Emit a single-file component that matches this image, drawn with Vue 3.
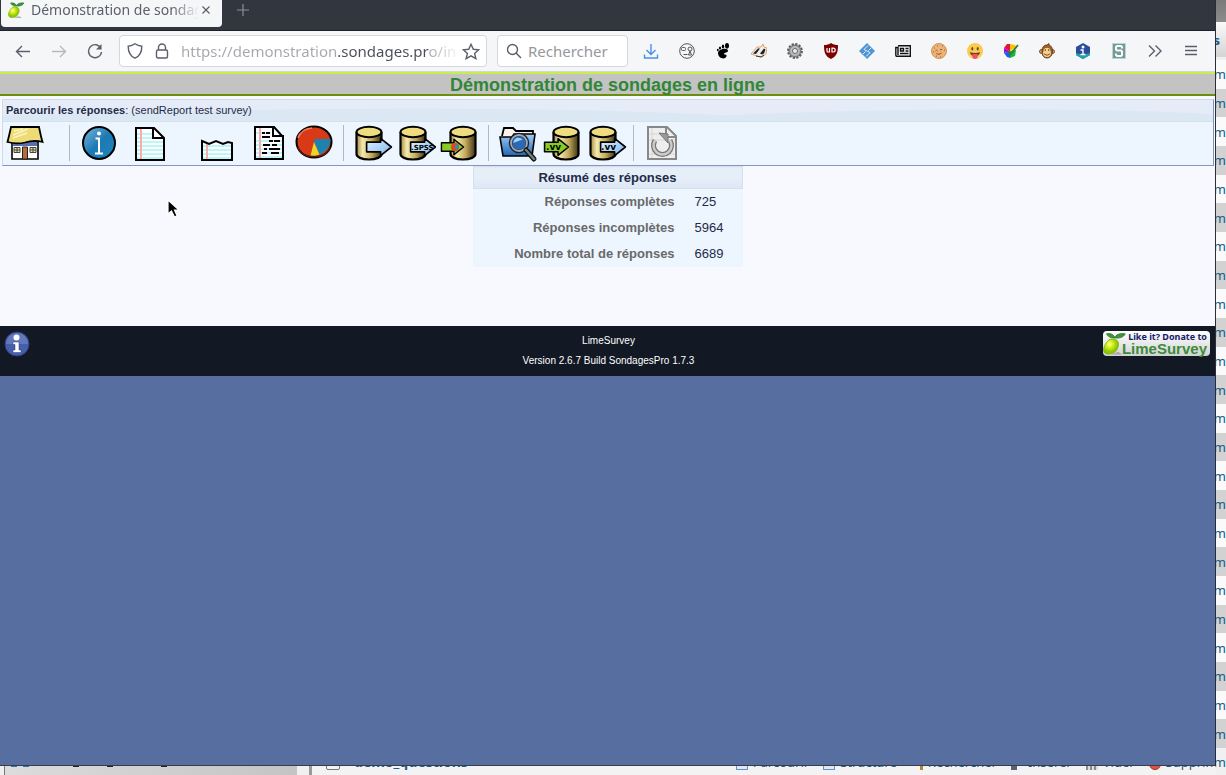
<script setup>
import { ref } from 'vue'

const url = ref('https://demonstration.sondages.pro/index.php')
const search = ref('')

const summary = [
  { label: 'Réponses complètes', value: 725 },
  { label: 'Réponses incomplètes', value: 5964 },
  { label: 'Nombre total de réponses', value: 6689 }
]
</script>

<template>
  <div class="desktop">
    <svg class="defs" aria-hidden="true">
      <defs>
        <linearGradient id="gold">
          <stop offset="0" stop-color="#a68a3e" />
          <stop offset="0.25" stop-color="#f6eab0" />
          <stop offset="0.6" stop-color="#c4ab5c" />
          <stop offset="1" stop-color="#3c3212" />
        </linearGradient>
        <linearGradient id="sky" x1="0" y1="0" x2="1" y2="1">
          <stop offset="0" stop-color="#e2f1ff" />
          <stop offset="1" stop-color="#7db7ee" />
        </linearGradient>
        <linearGradient id="folder" x1="0" y1="0" x2="0" y2="1">
          <stop offset="0" stop-color="#9fcdf8" />
          <stop offset="1" stop-color="#2265b4" />
        </linearGradient>
        <linearGradient id="ball" x1="0" y1="0" x2="1" y2="1">
          <stop offset="0" stop-color="#7fbbe0" />
          <stop offset="0.5" stop-color="#1d79b4" />
          <stop offset="1" stop-color="#1c86bd" />
        </linearGradient>
        <radialGradient id="lime" cx="0.4" cy="0.35">
          <stop offset="0" stop-color="#fdffa0" />
          <stop offset="0.5" stop-color="#d4ec12" />
          <stop offset="1" stop-color="#8cc80a" />
        </radialGradient>
      </defs>
      <symbol id="db" viewBox="0 0 28 36">
        <path d="M1.500 7v22c0 3 5 5.500 12.500 5.500s12.500-2.500 12.500-5.500V7" fill="url(#gold)" stroke="#000" stroke-width="2.200" />
        <ellipse cx="14" cy="7" rx="12.500" ry="5.200" fill="#f0dc80" stroke="#000" stroke-width="2" />
      </symbol>
      <symbol id="arrow" viewBox="0 0 26 18">
        <path d="M1.500 4.500h13V1L24.500 9 14.500 17V13.500h-13z" stroke="#000" stroke-width="1.500" stroke-linejoin="round" />
      </symbol>
      <symbol id="fruit" viewBox="0 0 18 18">
        <path d="M6 17h8l-3-2z" fill="#888" opacity="0.6" />
        <path d="M5 6c4-1 7 1 6 5s-4 6-8 5.500C0 16 0 13 1 11s2-4 4-5z" fill="url(#lime)" stroke="#78b012" stroke-width="0.600" />
        <path d="M8 5C5 5 3.500 4 2.500 2c2.500-.5 4.500 0 6 2.500C9.500 2.500 12 1.500 16 2c-1 2.500-4 3.500-8 3z" fill="#3d9636" stroke="#216b24" stroke-width="0.500" />
      </symbol>
    </svg>

    <div class="main">
      <div class="browser">
        <div class="tabs">
          <div class="tab">
            <svg class="favicon" viewBox="0 0 18 18"><use href="#fruit" /></svg>
            <span class="tab-title">Démonstration de sondages en ligne</span>
            <button class="close" aria-label="Fermer">
              <svg width="10" height="10" viewBox="0 0 10 10"><path d="M1.500 1.500l7 7M8.500 1.500l-7 7" stroke="#5b5f6b" stroke-width="1.200" /></svg>
            </button>
          </div>
          <button class="new-tab" aria-label="Nouvel onglet">
            <svg width="12" height="12" viewBox="0 0 12 12"><path d="M6 0v12M0 6h12" stroke="#8b8f98" stroke-width="1.200" /></svg>
          </button>
        </div>

        <div class="navbar">
          <button class="nav-btn" aria-label="Précédent">
            <svg width="16" height="16" viewBox="0 0 16 16" class="line"><path d="M15 8.500H2M7 3L1.500 8.500 7 14" /></svg>
          </button>
          <button class="nav-btn faded" aria-label="Suivant">
            <svg width="16" height="16" viewBox="0 0 16 16" class="line"><path d="M1 8.500h13M9 3l5.500 5.500L9 14" /></svg>
          </button>
          <button class="nav-btn" aria-label="Actualiser">
            <svg width="16" height="16" viewBox="0 0 16 16" class="line"><path d="M14 5.500A6.500 6.500 0 1 0 14.500 9" /><path d="M14.500 1v5.500H9z" fill="#5b5f6b" stroke="none" /></svg>
          </button>

          <div class="url-box">
            <svg width="16" height="16" viewBox="0 0 16 16" class="line"><path d="M8 .8C6 2.200 3.500 3 1.200 3.200c0 5.500 1.600 9.800 6.800 12 5.200-2.200 6.800-6.500 6.800-12C12.500 3 10 2.200 8 .8z" /></svg>
            <svg width="14" height="16" viewBox="0 0 14 16" class="line"><rect x="1.500" y="7" width="11" height="8" rx="1.500" /><path d="M3.500 7V4.500a3.500 3.500 0 0 1 7 0V7" /></svg>
            <input v-model="url" class="url" type="text" aria-label="Adresse" />
            <svg width="18" height="17" viewBox="0 0 18 17" class="line"><path d="M9 1.300l2.300 5 5.400.5-4.100 3.600 1.300 5.300L9 12.900l-4.900 2.800 1.300-5.300L1.300 6.800l5.400-.5z" /></svg>
          </div>

          <div class="search-box">
            <svg width="16" height="16" viewBox="0 0 16 16" class="line"><circle cx="6.500" cy="6.500" r="5" /><path d="M10 10l5 5" /></svg>
            <input v-model="search" class="search" type="text" placeholder="Rechercher" aria-label="Rechercher" />
          </div>

          <div class="extensions">
            <button class="nav-btn" aria-label="Téléchargements">
              <svg width="16" height="16" viewBox="0 0 16 16"><path d="M8 1v10M3.500 7L8 11.500 12.500 7M1.500 11.500V15h13v-3.500" fill="none" stroke="#4a90e8" stroke-width="1.400" /></svg>
            </button>
            <button class="nav-btn" aria-label="Visage">
              <svg width="16" height="16" viewBox="0 0 16 16" fill="none" stroke="#555"><circle cx="8" cy="8" r="7.300" /><rect x="2.500" y="4.500" width="4" height="3" rx="1" /><circle cx="11" cy="6" r="2" /><path d="M4.500 11.500h4M9.500 12l1.500-4 1.500 4z" /></svg>
            </button>
            <button class="nav-btn" aria-label="GNOME">
              <svg width="16" height="16" viewBox="0 0 16 16" fill="#000"><path d="M3 10c0-4 10-6 10-2 0 2-4 1-4 3 0 1 3 0 2.500 2C11 17 3 16 3 10z" /><ellipse cx="12" cy="2.800" rx="2" ry="2.800" /><ellipse cx="8" cy="3.500" rx="1.200" ry="1.900" /><ellipse cx="5" cy="5" rx="1.100" ry="1.600" /><ellipse cx="2.800" cy="7" rx=".9" ry="1.300" /></svg>
            </button>
            <button class="nav-btn" aria-label="Badger">
              <svg width="16" height="16" viewBox="0 0 16 16"><path d="M0 11l6-7 4 0 2-3 1 3 3 1-1 6-4 3-5-1z" fill="#eee" stroke="#d98235" stroke-width=".7" /><path d="M2 10.500l5-5h2l-4 5.500zM9 10.500l4-5 1.500 1-1.500 4-2 1z" fill="#222" /><path d="M5 13l5 1 3-2" stroke="#333" fill="none" /></svg>
            </button>
            <button class="nav-btn" aria-label="Options">
              <svg width="16" height="16" viewBox="0 0 16 16"><circle cx="8" cy="8" r="6.800" fill="#aaa" stroke="#5c5c5c" stroke-width="2.200" stroke-dasharray="2.200 1.360" /><circle cx="8" cy="8" r="5.500" fill="#bbb" stroke="#777" /><circle cx="8" cy="8" r="2.500" fill="#eee" stroke="#666" /></svg>
            </button>
            <button class="nav-btn" aria-label="uBlock">
              <svg width="16" height="16" viewBox="0 0 16 16"><path d="M8 0c2 1.500 4.500 2 7 2 0 6-.5 11-7 14C1.500 13 1 8 1 2c2.500 0 5-.5 7-2z" fill="#800000" /><path d="M4 5v3q0 1 1 1h1.500V5" fill="none" stroke="#fff" stroke-width="1.200" /><path d="M9 5.200h1.200q2 0 2 1.900t-2 1.900H9z" fill="none" stroke="#fff" stroke-width="1.200" /></svg>
            </button>
            <button class="nav-btn" aria-label="Synchronisation">
              <svg width="16" height="16" viewBox="0 0 16 16"><path d="M8 0l8 8-8 8-8-8z" fill="#4f94d4" /><path d="M9 2.500L5 6.500l3 1.500 3 1.500-4 4M12 5L9.500 7.500M6.500 8.500L4 11" fill="none" stroke="#f5f5f5" stroke-width=".9" /></svg>
            </button>
            <button class="nav-btn" aria-label="Lecture">
              <svg width="16" height="12" viewBox="0 0 16 12" fill="none" stroke="#111" stroke-width="1.400"><path d="M3 .8h12.300v10.500H1.500Q.8 11.300.8 10V2.500H3V10" /><path d="M5.500 3.500h3v2.500h-3zM10.500 3.500h3M10.500 6h3M5 8.500h8.500" /></svg>
            </button>
            <button class="nav-btn" aria-label="Cookies">
              <svg width="16" height="16" viewBox="0 0 16 16"><circle cx="8" cy="8" r="7.500" fill="#e9b478" stroke="#cf9355" /><path d="M3 5h1M6 3h1M11 3h1M13 7h1M5 13h1M9 14h1M2 9h1" stroke="#a5622d" stroke-width="1.200" /><path d="M4.500 8q1-1.500 2 0M9 7q1-1.500 2 0M5.500 10.500q2.500 2 5-.5" fill="none" stroke="#a8452f" /></svg>
            </button>
            <button class="nav-btn" aria-label="Émoticône">
              <svg width="16" height="16" viewBox="0 0 16 16"><circle cx="8" cy="8" r="8" fill="#fccb4e" /><ellipse cx="5.300" cy="5.800" rx="1" ry="1.700" fill="#65432a" /><ellipse cx="10.700" cy="5.800" rx="1" ry="1.700" fill="#65432a" /><path d="M3 9q5 2 10 0c-.5 3-2 4-5 4S3.500 12 3 9z" fill="#65432a" /><path d="M5.500 11h5v3.500q-2.500 3-5 0z" fill="#f0506e" /></svg>
            </button>
            <button class="nav-btn" aria-label="Couleurs">
              <svg width="16" height="16" viewBox="0 0 16 16"><path d="M7 8L1 5l3-4h3z" fill="#e5123c" /><path d="M7 8V1l5 1 1 2z" fill="#f5c400" /><path d="M7 8L1 5v5z" fill="#b800d8" /><path d="M7 8l-6 2 3 4 3 1z" fill="#1760e8" /><path d="M7 8v7l5-2 1-6z" fill="#14b83a" /><path d="M5 8l2.500 3L15 2" fill="none" stroke="#397a28" stroke-width="1.800" /></svg>
            </button>
            <button class="nav-btn" aria-label="Greasemonkey">
              <svg width="16" height="16" viewBox="0 0 16 16" stroke="#5b2e0c" stroke-width=".8"><circle cx="2.500" cy="8.500" r="2" fill="#dca45c" /><circle cx="13.500" cy="8.500" r="2" fill="#dca45c" /><path d="M3 8c0-4 2-6 5-6l2-1.500L10 2c2 .5 3.500 2.500 3.500 6 0 4-2 7-5.500 7s-5-3-5-7z" fill="#a5652a" /><path d="M4 8c0-5 8-5 8 0l.5 2c0 3-2 4.500-4.500 4.500S3.500 13 3.500 10z" fill="#f4d08e" stroke-width=".6" /><path d="M6.300 6v2M9.700 6v2M5 11q3 2.500 6 0" fill="none" /></svg>
            </button>
            <button class="nav-btn" aria-label="Info">
              <svg width="16" height="16" viewBox="0 0 16 16"><path d="M8 0l7 4v8l-7 4-7-4V4z" fill="#2b4c9b" /><path d="M1 10l7 2 7-2v2l-7 4-7-4z" fill="#24a3a7" /><circle cx="8" cy="4" r="1.500" fill="#fff" /><path d="M5.500 7H8v4.500M5.500 11.500h5" fill="none" stroke="#fff" stroke-width="1.400" /></svg>
            </button>
            <button class="nav-btn" aria-label="Stylus">
              <svg width="16" height="16" viewBox="0 0 16 16"><path d="M1.500.5h13v15h-13z" fill="#7d9797" stroke="#b4d6d4" /><path d="M11 5.500V4L10 3H6L5 4v2.500L6 7.500h4l1 1V12l-1 1H6l-1-1v-1.500" fill="none" stroke="#f2ffff" stroke-width="2" /></svg>
            </button>
            <button class="nav-btn" aria-label="Plus d'outils">
              <svg width="16" height="16" viewBox="0 0 16 16" class="line"><path d="M2 2.500L7.500 8 2 13.500M8.500 2.500L14 8l-5.500 5.500" /></svg>
            </button>
            <button class="nav-btn" aria-label="Menu">
              <svg width="16" height="16" viewBox="0 0 16 16" class="line"><path d="M2 3.500h12M2 7.500h12M2 11.500h12" /></svg>
            </button>
          </div>
        </div>

        <div class="page">
          <h1>Démonstration de sondages en ligne</h1>

          <div class="menubar">
            <div class="menubar-title">
              <svg class="wave" viewBox="0 0 1210 22" preserveAspectRatio="none"><path d="M0 16Q250 9 420 9T720 16Q900 8 1050 10T1210 16V22H0z" fill="#dce7f4" /></svg>
              <p><strong>Parcourir les réponses</strong>: (sendReport test survey)</p>
            </div>
            <div class="tools">
              <button class="tool home" aria-label="Accueil">
                <svg viewBox="0 0 40 40">
                  <path d="M7 19h26v17H7z" fill="#fff" stroke="#000" stroke-width="1.600" />
                  <path d="M8 19h24v4H8z" fill="#5870b0" />
                  <path d="M9 24.500h6v5H9zM25 24.500h6v5h-6z" fill="#eadf9e" stroke="#444" />
                  <path d="M12 24.500v5M9 27h6M28 24.500v5M25 27h6" stroke="#444" />
                  <path d="M17.500 24h5v12h-5z" fill="#b86b3c" stroke="#222" />
                  <path d="M6 4h28c1 5 2 10 3.500 15-5-1.500-11-1.500-17.500.5-6 1.500-12 1-17.500-.5C4 13 5 9 6 4z" fill="#eddb78" stroke="#000" stroke-width="1.800" />
                  <path d="M9 8l9-2M8 12l15-6M8 15l14-5" stroke="#fbf5bd" stroke-width="1.400" />
                </svg>
              </button>
              <hr class="sep wide" />
              <button class="tool" aria-label="Informations">
                <svg viewBox="0 0 40 40">
                  <circle cx="20" cy="20" r="16" fill="url(#ball)" stroke="#000" stroke-width="2" />
                  <circle cx="20" cy="10.500" r="2" fill="#fff" />
                  <path d="M16.500 15.500H20V30M16 30.500h8" fill="none" stroke="#fff" stroke-width="2" />
                </svg>
              </button>
              <button class="tool doc" aria-label="Toutes les réponses">
                <svg viewBox="0 0 40 40">
                  <path d="M6 5h18l10 10v22H6z" fill="#fff" />
                  <path d="M7 11h15M7 15h15M7 19h26M7 23h26M7 27h26M7 31h26M7 35h26" stroke="#a5f3f6" stroke-width="1.600" />
                  <path d="M11 6v31" stroke="#f8adad" stroke-width="2" />
                  <path d="M6 5h18l10 10v22H6zM23 5v10h11" fill="none" stroke="#000" stroke-width="2" />
                </svg>
              </button>
              <button class="tool last" aria-label="Dernières réponses">
                <svg viewBox="0 0 40 40">
                  <path d="M5 18l7 3 7-3 7 3 5-2 4 1v17H5z" fill="#fff" />
                  <path d="M6 23h28M6 27h28M6 31h28M6 35h28" stroke="#a5f3f6" stroke-width="1.600" />
                  <path d="M10 21v16" stroke="#f8adad" stroke-width="2" />
                  <path d="M5 18l7 3 7-3 7 3 5-2 4 1v17H5z" fill="none" stroke="#000" stroke-width="2" />
                </svg>
              </button>
              <button class="tool report" aria-label="Saisie de données">
                <svg viewBox="0 0 40 40">
                  <path d="M6 4h19l9 10v22H6z" fill="#fff" />
                  <path d="M7 10h15M7 18h26M7 22h26M7 26h26M7 30h26M7 34h26" stroke="#a5f3f6" stroke-width="1.400" />
                  <path d="M11 5v31" stroke="#f8adad" stroke-width="2" />
                  <path d="M6 4h19l9 10v22H6zM24 4v9h11" fill="none" stroke="#000" stroke-width="2" />
                  <path d="M13 10h3M17 10h4M13 14h8M20 18h4M25 18h6M14 22h7M23 22h5M15 26h3M20 26h11M13 30h5M22 30h8" stroke="#000" stroke-width="2" />
                </svg>
              </button>
              <button class="tool pie" aria-label="Statistiques">
                <svg viewBox="0 0 40 40">
                  <ellipse cx="20" cy="19" rx="17.500" ry="15.500" fill="#d83a17" stroke="#000" stroke-width="2" />
                  <path d="M20 19l1-3h15.500c0 7-4 13-11 15.500z" fill="#1d82b0" />
                  <path d="M20 19l5.500 12.500c-3 1.500-7 1.500-9 1z" fill="#ecd526" />
                  <path d="M4 15Q7 6 18 5" fill="none" stroke="#f08060" stroke-width="1.500" />
                  <path d="M36 24c-3 13-29 13-32 0" fill="none" stroke="#541a12" stroke-width="1.500" />
                </svg>
              </button>
              <hr class="sep" />
              <button class="tool" aria-label="Exporter">
                <svg viewBox="0 0 40 40"><use href="#db" x="2" y="2" width="28" height="36" /><use href="#arrow" x="12" y="14" width="28" height="20" fill="url(#sky)" /></svg>
              </button>
              <button class="tool spss" aria-label="Exporter SPSS">
                <svg viewBox="0 0 40 40"><use href="#db" x="2" y="2" width="28" height="36" /><use href="#arrow" x="12" y="14" width="28" height="20" fill="url(#sky)" /><text x="14" y="27" class="tiny">.SPSS</text></svg>
              </button>
              <button class="tool import" aria-label="Importer">
                <svg viewBox="0 0 40 40"><use href="#db" x="10" y="2" width="28" height="36" /><use href="#arrow" x="1" y="15" width="25" height="18" fill="#86cc22" /><circle cx="16" cy="24" r="4" fill="#de452b" /><path d="M16 24v-2h4q0 3-2 5z" fill="#2992b9" /></svg>
              </button>
              <hr class="sep" />
              <button class="tool" aria-label="Rechercher des réponses">
                <svg viewBox="0 0 40 40">
                  <path d="M4 13l2-8h9l3 3h17v8" fill="#fff3f0" stroke="#000" stroke-width="1.800" />
                  <path d="M2 14h12l2-3h21l-3 22H5z" fill="url(#folder)" stroke="#000" stroke-width="1.600" />
                  <circle cx="21" cy="20" r="8.500" fill="#2c69b4" stroke="#222" stroke-width="3.500" />
                  <circle cx="21" cy="20" r="8" fill="none" stroke="#9dabc0" stroke-width="1.800" />
                  <path d="M15.500 20c0-5 6-7 9-3-3 0-6 2-9 3z" fill="#9fd0f5" />
                  <path d="M28 27l8 9" stroke="#111" stroke-width="5" stroke-linecap="round" /><path d="M28 27l8 9" stroke="#708078" stroke-width="2.500" stroke-linecap="round" />
                </svg>
              </button>
              <button class="tool spss" aria-label="Importer VV">
                <svg viewBox="0 0 40 40"><use href="#db" x="10" y="2" width="28" height="36" /><use href="#arrow" x="1" y="14" width="27" height="20" fill="#86cc22" /><text x="4" y="27" class="tiny vv">.vv</text></svg>
              </button>
              <button class="tool vv-out" aria-label="Exporter VV">
                <svg viewBox="0 0 40 40"><use href="#db" x="2" y="2" width="28" height="36" /><use href="#arrow" x="12" y="14" width="28" height="20" fill="url(#sky)" /><text x="14" y="27" class="tiny vv">.vv</text></svg>
              </button>
              <hr class="sep tight" />
              <button class="tool" aria-label="Réponses itératives">
                <svg viewBox="0 0 40 40">
                  <path d="M6 4h19l9 9v23H6z" fill="#eee" />
                  <path d="M10 5v31M7 11h16M7 17h26M7 31h26" stroke="#d4d4d4" />
                  <path d="M6 4h19l9 9v23H6zM24 4v10h10" fill="none" stroke="#888" stroke-width="2" />
                  <path d="M13 17.500a9 9 0 1 0 15 0" fill="none" stroke="#777" stroke-width="5" /><path d="M13 17.500a9 9 0 1 0 15 0" fill="none" stroke="#ccc" stroke-width="2.500" />
                  <path d="M17 10l9 1v9z" fill="#999" stroke="#777" />
                </svg>
              </button>
            </div>
          </div>

          <table class="summary">
            <thead>
              <tr><th colspan="2" class="caption">Résumé des réponses</th></tr>
            </thead>
            <tbody>
              <tr v-for="row in summary" :key="row.label">
                <th scope="row">{{ row.label }}</th>
                <td>{{ row.value }}</td>
              </tr>
            </tbody>
          </table>

          <svg class="cursor" viewBox="0 0 14 20"><path d="M1 1v14l3.500-3 3 6 2.500-1.200L7.500 11H12z" stroke="#fff" stroke-width="1.200" /></svg>
        </div>

        <footer class="footer">
          <a href="#" class="help" aria-label="Aide">
            <svg width="26" height="26" viewBox="0 0 26 26">
              <circle cx="13" cy="13" r="12" fill="#465fac" stroke="#313f82" />
              <path d="M2 13a11 11 0 0 1 22 0z" fill="#7488c4" opacity="0.600" />
              <circle cx="12.500" cy="6.500" r="3" fill="#fff" /><path d="M9 11h6v8h2v2.500H9V19h2v-5.500H9z" fill="#fff" stroke="#29388c" stroke-width=".5" />
            </svg>
          </a>
          <div class="version">
            <p><a href="#">LimeSurvey</a></p>
            <p>Version 2.6.7 Build SondagesPro 1.7.3</p>
          </div>
          <a href="#" class="donate">
            <svg width="25" height="25" viewBox="0 0 18 18"><use href="#fruit" /></svg>
            <span class="donate-text"><span class="like">Like it? Donate to</span><span class="brand">LimeSurvey</span></span>
          </a>
        </footer>
      </div>

      <div class="behind">
        <div class="behind-left"><span class="dash blue"></span><span class="dash blue"></span><span class="dash one"></span><span class="dash two"></span><span class="dash three"></span></div>
        <div class="behind-table">
          <span class="box"></span>
          <a href="#" class="name">demo_questions</a>
          <span class="star">★</span>
          <a href="#" class="op"><i class="ico grid"></i>Parcourir</a>
          <a href="#" class="op"><i class="ico grid"></i>Structure</a>
          <a href="#" class="op"><i class="ico glass"></i>Rechercher</a>
          <a href="#" class="op"><i class="ico insert"></i>Insérer</a>
          <a href="#" class="op"><i class="ico trash"></i>Vider</a>
          <a href="#" class="op"><i class="ico stop"></i>Supprim</a>
        </div>
      </div>
    </div>

    <div class="side">
      <div class="side-top"></div>
      <div class="side-head"><span>s</span></div>
      <div v-for="n in 24" :key="n" class="side-row"><span>m</span></div>
      <div class="side-end"><span>m</span></div>
    </div>
  </div>
</template>

<style>
body {
  background: #f0f0f0;
  overflow: hidden;
}
</style>

<style scoped>
.desktop {
  display: flex;
  height: 100vh;
  font-family: "Liberation Sans", Arial, sans-serif;
}

.defs {
  position: absolute;
  width: 0;
  height: 0;
}

p,
h1 {
  margin: 0;
}

button {
  padding: 0;
  border: 0;
  background: none;
}

button svg {
  display: block;
}

a {
  color: inherit;
  text-decoration: none;
}

.main {
  flex: 1;
  min-width: 0;
  display: flex;
  flex-direction: column;
}

.browser {
  flex: 1;
  display: flex;
  flex-direction: column;
  background: #566fa0;
  border-right: 1px solid #2b2e38;
  border-bottom: 1px solid #3a3d46;
}

/* browser chrome */
.tabs {
  display: flex;
  height: 30px;
  background: #32363f;
  border-bottom: 1px solid #1f2129;
  font-family: "Noto Sans", sans-serif;
}

.tab {
  display: flex;
  align-items: center;
  width: 221px;
  height: 27px;
  margin-left: 1px;
  padding: 0 11px 8px 7px;
  box-sizing: border-box;
  background: #f5f6f7;
  border-radius: 0 0 4px 4px;
}

.favicon {
  width: 18px;
  height: 18px;
  margin-right: 5px;
}

.tab-title {
  flex: 1;
  overflow: hidden;
  font-size: 14px;
  line-height: 20px;
  color: #5b5f6b;
  white-space: nowrap;
  mask-image: linear-gradient(to right, #000 84%, transparent);
}

.close {
  margin-left: 2px;
}

.new-tab {
  height: 20px;
  margin-left: 15px;
}

.navbar {
  display: flex;
  align-items: center;
  height: 40px;
  padding: 0 6px 0 5px;
  background: #f5f6f7;
  border-bottom: 1px solid #d4d6d8;
}

.nav-btn {
  display: flex;
  align-items: center;
  justify-content: center;
  width: 36px;
  height: 32px;
}

.faded {
  opacity: 0.4;
}

.line {
  flex: none;
  fill: none;
  stroke: #5b5f6b;
  stroke-width: 1.4;
}

.url-box,
.search-box {
  display: flex;
  align-items: center;
  height: 32px;
  box-sizing: border-box;
  background: #fff;
  border: 1px solid #d5d7da;
  border-radius: 4px;
}

.url-box {
  flex: 1;
  min-width: 0;
  gap: 12px;
  margin: 0 10px 0 6px;
  padding: 0 6px 0 7px;
}

.url,
.search {
  flex: 1;
  min-width: 0;
  padding: 0;
  border: 0;
  outline: 0;
  font-family: "Noto Sans", sans-serif;
  font-size: 15px;
  line-height: 22px;
}

.url {
  margin-right: -6px;
  background: linear-gradient(to right, #a5a7ad 156px, #4a4d58 156px, #4a4d58 248px, #a5a7ad 248px, transparent 280px);
  background-clip: text;
  -webkit-text-fill-color: transparent;
}

.search-box {
  width: 131px;
  gap: 6px;
  padding: 0 8px;
}

.search::placeholder {
  color: #95979d;
}

.extensions {
  display: flex;
  margin-left: 5px;
}

/* survey page */
.page {
  position: relative;
  min-height: 254px;
  background: #f8f9ff;
}

h1 {
  padding-top: 2px;
  border-top: 2px solid #c8ee4c;
  border-bottom: 2px solid #6b8e0b;
  background: #c3c3c3;
  color: #328637;
  font-size: 18px;
  line-height: 18px;
  text-align: center;
}

.menubar {
  margin: 3px 1px 0 2px;
  border: 1px solid #cbdcec;
  border-right-color: #7c94bd;
  border-bottom-color: #8397bf;
  background: #edf6ff;
}

.menubar-title {
  position: relative;
  border-bottom: 1px solid #d2e0f0;
  background: #e5ecf7;
  color: #1e2b49;
  font-size: 11px;
  line-height: 21px;
}

.menubar-title p {
  position: relative;
  padding-left: 3px;
}

.wave {
  position: absolute;
  width: 100%;
  height: 100%;
}

.tools {
  display: flex;
  align-items: center;
  height: 41px;
  padding-bottom: 2px;
}

.tool {
  width: 40px;
  height: 40px;
}

.home {
  margin-left: 2px;
}

.doc {
  margin-left: 11px;
}

.last {
  margin-left: 27px;
}

.report {
  margin-left: 12px;
}

.pie {
  margin-left: 5px;
}

.spss {
  margin-left: 4px;
}

.import {
  margin-left: 2px;
}

.vv-out {
  margin-left: 5px;
}

.sep {
  width: 1px;
  height: 36px;
  margin: 0 9px;
  border: 0;
  background: #b4b8bd;
}

.wide {
  margin-left: 24px;
}

.tight {
  margin: 0 8px 0 6px;
}

.tiny {
  font: bold 7px "DejaVu Sans", sans-serif;
}

.vv {
  font-size: 9px;
}

.summary {
  width: 270px;
  margin: 0 auto;
  border-collapse: collapse;
  background: #edf6ff;
  color: #1e2b49;
  font-size: 13px;
}

.summary th,
.summary td {
  height: 26px;
  padding: 0 10px;
  box-sizing: border-box;
}

.summary th {
  color: #696969;
  text-align: right;
}

.summary .caption {
  height: 22px;
  border: 1px solid #d2e0f0;
  background: linear-gradient(to bottom, #e6eef8 50%, #dde8f5);
  color: #1e2b49;
  text-align: center;
}

.cursor {
  position: absolute;
  left: 167px;
  top: 127px;
  width: 14px;
  height: 20px;
}

.footer {
  display: flex;
  align-items: flex-start;
  justify-content: space-between;
  height: 50px;
  padding: 5px 5px 0 4px;
  box-sizing: border-box;
  background: #121925;
}

.help {
  width: 110px;
}

.version {
  color: #fff;
  font-size: 10px;
  line-height: 20px;
  text-align: center;
}

.donate {
  display: flex;
  width: 107px;
  height: 25px;
  border-radius: 4px;
  background: linear-gradient(to bottom, #fff, #d2d2d2);
}

.donate svg {
  flex: none;
  margin-right: -8px;
}

.donate-text {
  display: flex;
  flex: 1;
  flex-direction: column;
  align-items: flex-end;
  padding-right: 3px;
  white-space: nowrap;
}

.like {
  color: #14206e;
  font: bold 9px/11px "Noto Sans", sans-serif;
}

.brand {
  color: #3b8b3c;
  font-size: 15px;
  font-weight: bold;
  line-height: 13px;
}

/* window partly hidden behind the browser */
.behind {
  display: flex;
  height: 9px;
  overflow: hidden;
  color: #235a81;
  font-family: "Noto Sans", sans-serif;
  font-size: 13px;
  line-height: 26px;
}

.behind-left {
  display: flex;
  flex: none;
  width: 292px;
  margin-left: 4px;
  border-left: 1px solid #777;
  background: linear-gradient(to right, #dcdcdc, #c4c4c4);
}

.dash {
  width: 6px;
  height: 1px;
  margin-left: 6px;
  background: #222;
}

.blue {
  background: #2b76b5;
}

.one {
  margin-left: 44px;
}

.two {
  margin-left: 28px;
}

.three {
  margin-left: 48px;
}

.behind-table {
  display: flex;
  flex: 1;
  min-width: 0;
  align-items: flex-end;
  margin-left: 12px;
  padding-left: 14px;
  border-left: 3px solid #999;
  background: #f3f3f3;
  white-space: nowrap;
}

.box {
  flex: none;
  width: 12px;
  height: 12px;
  margin-bottom: 5px;
  border: 1px solid #777;
  border-radius: 2px;
}

.name {
  flex: none;
  width: 356px;
  margin-left: 14px;
  font-size: 14px;
  font-weight: bold;
}

.star {
  color: #8b8b7e;
  font-family: "DejaVu Sans", sans-serif;
}

.op {
  display: flex;
  flex: none;
  align-items: flex-end;
  margin-left: 14px;
}

.ico {
  width: 12px;
  height: 12px;
  margin: 0 5px 5px 0;
  border: 1px solid #6b8fc4;
  box-sizing: border-box;
}

.grid {
  background: #dce7f7;
}

.glass {
  border: 0;
  border-right: 3px solid #b98132;
}

.insert {
  border: 0;
  border-left: 6px solid #58617a;
}

.trash {
  border: 0;
  background: repeating-linear-gradient(to right, #8a8a8a 0 2px, #ddd 2px 4px);
}

.stop {
  border-color: #b92a1c;
  border-radius: 50%;
  background: #e05444;
}

/* right edge of the same window */
.side {
  display: flex;
  flex-direction: column;
  width: 10px;
  overflow: hidden;
  color: #235a81;
  font-family: "Noto Sans", sans-serif;
  font-size: 13px;
}

.side-top {
  height: 22px;
  background: linear-gradient(to bottom, #7a7a7a, #8c8c8c);
}

.side-head,
.side-row,
.side-end {
  display: flex;
  align-items: center;
  justify-content: flex-end;
}

.side-head {
  height: 35px;
  margin-bottom: 3px;
  padding-right: 6px;
  background: linear-gradient(to bottom, #fafafa, #d4d4d4);
  font-weight: bold;
}

.side-row {
  flex: 1;
  background: #fafafa;
}

.side-row:nth-child(even) {
  background: #d2d2d2;
}

.side-end {
  height: 27px;
}
</style>
